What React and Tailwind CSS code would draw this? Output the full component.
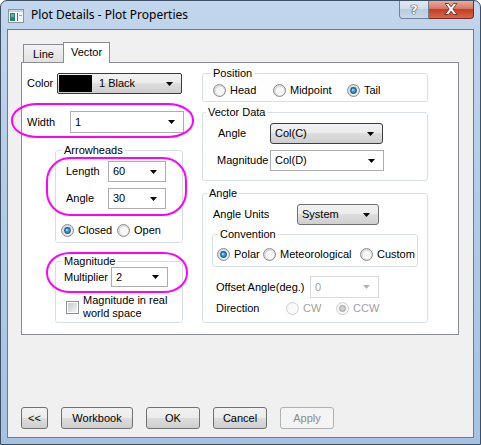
import React from 'react';

const BTN_BG = 'bg-[linear-gradient(#f2f2f2_0%,#ebebeb_50%,#dddddd_50%,#cfcfcf_100%)]';

function Arrow({ disabled }) {
  return (
    <svg width="7" height="4" viewBox="0 0 7 4" className="shrink-0">
      <path d="M0 0H7L3.5 4Z" fill={disabled ? '#b4b4b4' : '#000'} />
    </svg>
  );
}

function Combo({ className = '', variant = 'white', children }) {
  const look = {
    white: 'border-[#abadb3] bg-white',
    button: `rounded-[3px] border-[#707070] ${BTN_BG}`,
    focus: `rounded-[3px] border-[#3d3d3d] ${BTN_BG}`,
    disabled: 'border-[#d9d9d9] bg-white text-[#a0a0a0]',
  }[variant];
  return (
    <div className={`flex items-center border pl-[4px] pr-[8px] ${look} ${className}`}>
      <span className="flex-1 whitespace-nowrap">{children}</span>
      <Arrow disabled={variant === 'disabled'} />
    </div>
  );
}

function Radio({ checked, disabled }) {
  return (
    <svg width="13" height="13" viewBox="0 0 13 13" className="shrink-0">
      <circle cx="6.5" cy="6.5" r="6" fill={disabled ? '#f7f7f7' : '#dcdcdc'} stroke={disabled ? '#cfcfcf' : '#8f8f8f'} />
      <circle cx="7" cy="7" r="4.2" fill={disabled ? '#fbfbfb' : '#f7f7f7'} />
      {checked && <circle cx="6.5" cy="6.5" r="3.4" fill={disabled ? '#b0b0b0' : '#1d5f98'} />}
      {checked && <circle cx="6.5" cy="6.5" r="2.2" fill={disabled ? '#d2d2d2' : '#3d9ad8'} />}
      {checked && !disabled && <circle cx="5.9" cy="5.9" r="1" fill="#a9e0ff" />}
    </svg>
  );
}

function RadioItem({ label, checked, disabled, className = '' }) {
  return (
    <div className={`flex items-center gap-[4px] ${disabled ? 'text-[#a0a0a0]' : ''} ${className}`}>
      <Radio checked={checked} disabled={disabled} />
      <span>{label}</span>
    </div>
  );
}

function Group({ title, className = '', legendClass = '', children }) {
  return (
    <fieldset className={`rounded-[3px] border border-[#d5dfe5] ${className}`}>
      <legend className={`px-[2px] ${legendClass}`}>{title}</legend>
      {children}
    </fieldset>
  );
}

function Button({ children, disabled, className = '' }) {
  return (
    <div
      className={`flex h-[22px] items-center justify-center rounded-[3px] border ${
        disabled ? 'border-[#adb2b5] bg-[#f4f4f4] text-[#8b8b8b]' : `border-[#707070] ${BTN_BG}`
      } ${className}`}
    >
      {children}
    </div>
  );
}

function AppIcon() {
  return (
    <svg width="16" height="14" viewBox="0 0 16 14">
      <rect x="0.5" y="0.5" width="15" height="13" fill="#f4f6f8" stroke="#8a949e" />
      <rect x="1" y="1" width="14" height="2" fill="#c9d3dc" />
      <rect x="2" y="4" width="5" height="8" fill="#2f7f74" />
      <rect x="3" y="5" width="3" height="3" fill="#62b3a2" />
      <rect x="9" y="4" width="1" height="8" fill="#5d6b78" />
      <rect x="11" y="6" width="3" height="1" fill="#9aa6b1" />
    </svg>
  );
}

export default function App() {
  return (
    <div className="relative h-[445px] w-[481px] overflow-hidden rounded-t-[7px] border border-[#3e4f63] bg-[linear-gradient(180deg,#c2d6ed_0%,#b3cbe7_45%,#a6c2e2_100%)] font-['Liberation_Sans',Arial,sans-serif] text-[11px] leading-[13px] text-black">
      {/* title bar */}
      <div className="flex h-[28px]">
        <div className="ml-[7px] mt-[8px]">
          <AppIcon />
        </div>
        <div className="ml-[7px] mt-[6px] font-['Noto_Sans',sans-serif] text-[12px] leading-[16px] text-black">
          Plot Details - Plot Properties
        </div>
        <div className="-mt-[1px] ml-auto mr-[6px] flex h-[19px]">
          <div className="flex w-[30px] items-center justify-center rounded-bl-[4px] border border-t-0 border-[#6f8196] bg-[linear-gradient(#e3ebf5_0%,#d0dcea_50%,#b9cbe0_50%,#c9d8ea_100%)]">
            <span className="font-['DejaVu_Sans',sans-serif] text-[13px] font-bold leading-[13px] text-white [text-shadow:0_0_1px_#2c3b4d,0_0_1px_#2c3b4d,0_0_1px_#2c3b4d]">?</span>
          </div>
          <div className="flex w-[45px] items-center justify-center rounded-br-[4px] border border-l-0 border-t-0 border-[#7a2a1e] bg-[linear-gradient(#eab1a6_0%,#d9735f_50%,#c13d24_50%,#d8654a_100%)]">
            <svg width="14" height="12" viewBox="0 0 14 12">
              <path d="M1 0.5H4.5L7 3.8L9.5 0.5H13L8.8 6L13 11.5H9.5L7 8.2L4.5 11.5H1L5.2 6Z" fill="#fff" stroke="#5a1f14" strokeWidth="0.8" />
            </svg>
          </div>
        </div>
      </div>

      {/* client area */}
      <div className="mx-[6px] h-[409px] border border-[#6c7b8c] bg-[#f0f0f0] pl-[13px] pt-[12px]">
        {/* tabs */}
        <div className="flex h-[20px] items-end pl-[2px]">
          <div className="flex h-[18px] w-[40px] items-center justify-center border border-b-0 border-r-0 border-[#898c95] bg-[linear-gradient(#f3f3f3,#e0e0e0)] pt-[1px]">
            Line
          </div>
          <div className="relative z-10 -mb-[1px] flex h-[21px] w-[47px] items-start justify-center border border-b-0 border-[#898c95] bg-white pt-[3px]">
            Vector
          </div>
        </div>

        {/* panel */}
        <div className="flex h-[273px] w-[438px] border border-[#898c95] bg-white">
          {/* left column */}
          <div className="flex w-[180px] flex-col pl-[5px] pt-[10px]">
            <div className="flex h-[21px] items-center">
              <span className="w-[30px]">Color</span>
              <div className="flex h-[21px] w-[125px] items-center rounded-[2px] border border-[#3a3a3a] bg-[linear-gradient(#f2f2f2_0%,#ebebeb_50%,#dddddd_50%,#cfcfcf_100%)] pr-[8px]">
                <div className="ml-[1px] h-[17px] w-[33px] bg-black" />
                <span className="ml-[7px] flex-1">1 Black</span>
                <Arrow />
              </div>
            </div>
            <div className="mt-[17px] flex h-[22px] items-center">
              <span className="w-[43px]">Width</span>
              <Combo className="h-[22px] w-[114px]">1</Combo>
            </div>

            <Group title="Arrowheads" className="ml-[28px] mt-[11px] h-[99px] w-[128px]" legendClass="ml-[6px]">
              <div className="mt-[4px] flex h-[21px] items-center pl-[10px]">
                <span className="w-[42px]">Length</span>
                <Combo className="h-[21px] w-[58px]">60</Combo>
              </div>
              <div className="mt-[6px] flex h-[21px] items-center pl-[10px]">
                <span className="w-[42px]">Angle</span>
                <Combo className="h-[21px] w-[58px]">30</Combo>
              </div>
              <div className="mt-[14px] flex h-[14px] items-center pl-[5px]">
                <RadioItem label="Closed" checked className="w-[56px]" />
                <RadioItem label="Open" />
              </div>
            </Group>

            <Group title="Magnitude" className="ml-[28px] mt-[12px] h-[68px] w-[128px]" legendClass="ml-[6px]">
              <div className="-mt-[1px] flex h-[20px] items-center pl-[8px]">
                <span className="w-[47px]">Multiplier</span>
                <Combo className="h-[20px] w-[57px]">2</Combo>
              </div>
              <div className="mt-[7px] flex items-start pl-[10px]">
                <div className="mt-[7px] flex h-[13px] w-[13px] shrink-0 items-center justify-center border border-[#8e8f8f] bg-white">
                  <div className="h-[9px] w-[9px] bg-[linear-gradient(135deg,#c6cad0,#f4f4f4)]" />
                </div>
                <span className="ml-[4px]">
                  Magnitude in real
                  <br />
                  world space
                </span>
              </div>
            </Group>
          </div>

          {/* right column */}
          <div className="flex w-[226px] flex-col pt-[4px]">
            <Group title="Position" className="h-[35px] w-[226px]" legendClass="ml-[8px]">
              <div className="mt-[3px] flex h-[14px] items-center pl-[10px]">
                <RadioItem label="Head" className="w-[60px]" />
                <RadioItem label="Midpoint" className="w-[74px]" />
                <RadioItem label="Tail" checked />
              </div>
            </Group>

            <Group title="Vector Data" className="mt-[4px] h-[75px] w-[226px]" legendClass="ml-[3px]">
              <div className="mt-[4px] flex h-[21px] items-center pl-[15px]">
                <span className="w-[52px]">Angle</span>
                <Combo variant="focus" className="h-[21px] w-[113px]">Col(C)</Combo>
              </div>
              <div className="mt-[6px] flex h-[21px] items-center pl-[14px]">
                <span className="w-[53px]">Magnitude</span>
                <Combo className="h-[21px] w-[114px]">Col(D)</Combo>
              </div>
            </Group>

            <Group title="Angle" className="mt-[6px] h-[136px] w-[226px]" legendClass="ml-[4px]">
              <div className="mt-[4px] flex h-[21px] items-center pl-[10px]">
                <span className="w-[84px]">Angle Units</span>
                <Combo variant="button" className="h-[21px] w-[82px]">System</Combo>
              </div>

              <Group title="Convention" className="ml-[9px] mt-[3px] h-[39px] w-[206px]" legendClass="ml-[5px]">
                <div className="mt-[6px] flex h-[14px] items-center pl-[4px]">
                  <RadioItem label="Polar" checked className="w-[46px]" />
                  <RadioItem label="Meteorological" className="w-[97px]" />
                  <RadioItem label="Custom" />
                </div>
              </Group>

              <div className="mt-[9px] flex h-[22px] items-center pl-[13px]">
                <span className="w-[94px]">Offset Angle(deg.)</span>
                <Combo variant="disabled" className="h-[22px] w-[69px]">0</Combo>
              </div>
              <div className="mt-[3px] flex h-[14px] items-center pl-[13px]">
                <span className="w-[70px]">Direction</span>
                <RadioItem label="CW" disabled className="w-[50px]" />
                <RadioItem label="CCW" checked disabled />
              </div>
            </Group>
          </div>
        </div>

        {/* bottom buttons */}
        <div className="mt-[72px] flex gap-[13px]">
          <Button className="w-[27px]">&lt;&lt;</Button>
          <Button className="w-[72px]">Workbook</Button>
          <Button className="w-[54px]">OK</Button>
          <Button className="w-[54px]">Cancel</Button>
          <Button className="w-[54px]" disabled>Apply</Button>
        </div>
      </div>

      {/* annotation ellipses */}
      <div className="pointer-events-none absolute left-[10px] top-[102px] h-[35px] w-[183px] rounded-[26px/17px] border-2 border-[#ff00ff]" />
      <div className="pointer-events-none absolute left-[45px] top-[156px] h-[59px] w-[141px] rounded-[24px] border-2 border-[#ff00ff]" />
      <div className="pointer-events-none absolute left-[45px] top-[251px] h-[41px] w-[142px] rounded-[24px/20px] border-2 border-[#ff00ff]" />
    </div>
  );
}
